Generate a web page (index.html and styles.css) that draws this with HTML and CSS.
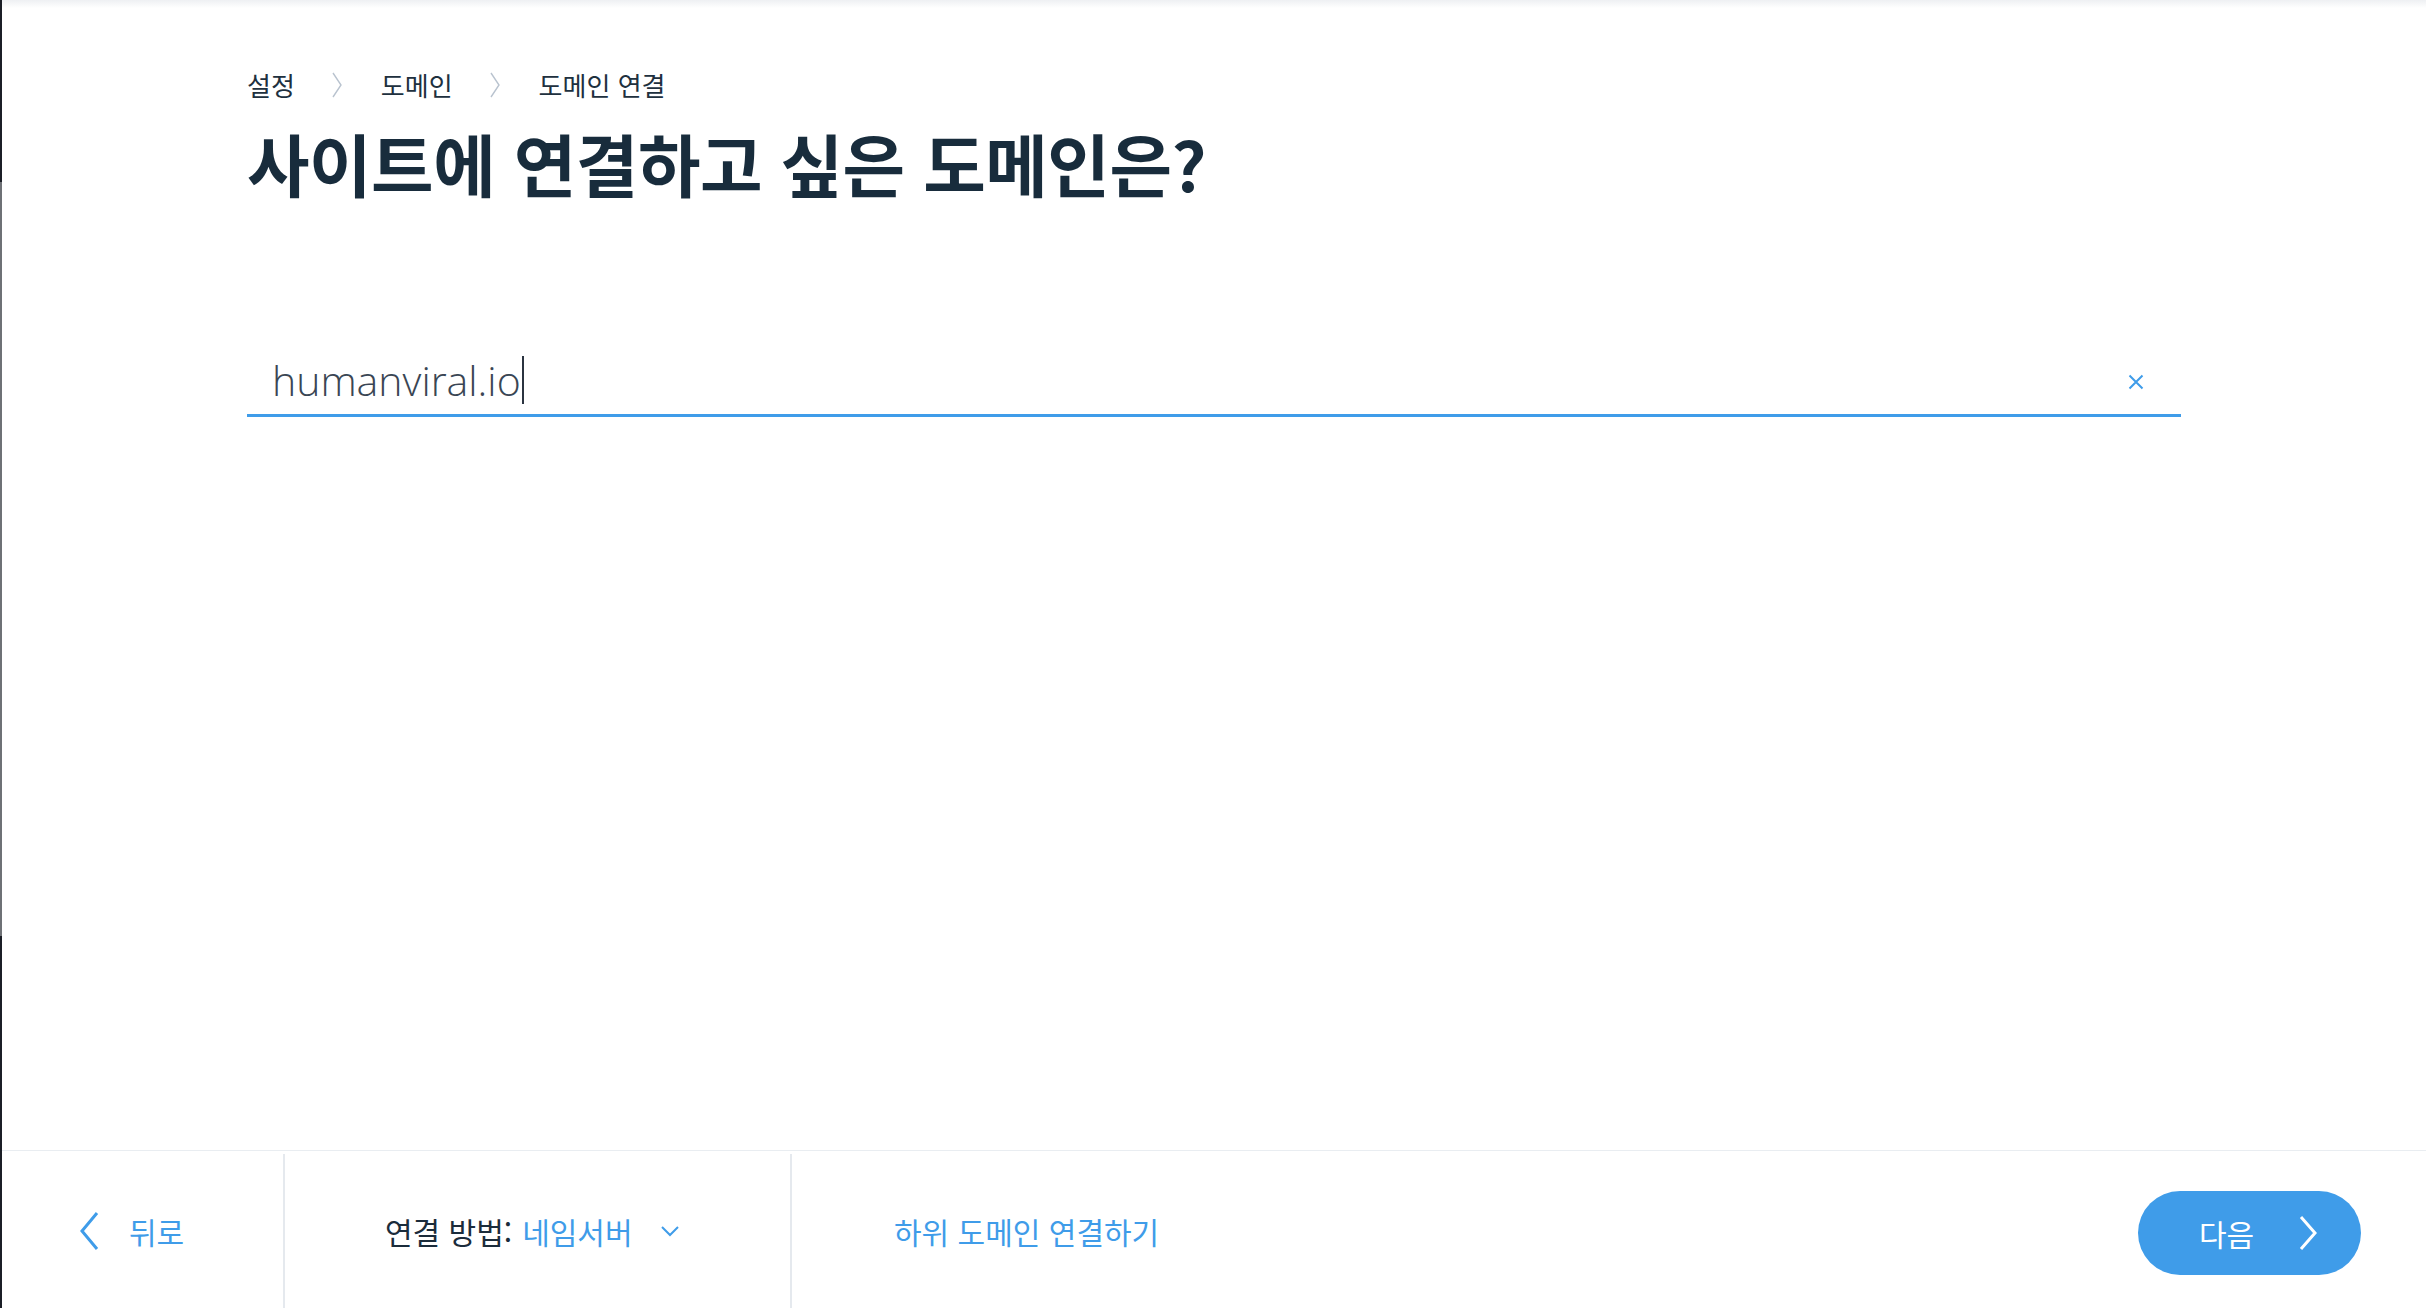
FILE: index.html
```html
<!DOCTYPE html>
<html lang="ko">
<head>
<meta charset="utf-8">
<title>도메인 연결</title>
<link rel="stylesheet" href="styles.css">
</head>
<body>
<div class="frame">
  <div class="edge"></div>
  <div class="page">
    <main class="content">
      <nav class="crumbs">
        <span class="crumb">설정</span>
        <svg class="sep" viewBox="0 0 12 26" width="12" height="26"><path d="M2 1 L10 13 L2 25" fill="none" stroke="#b9c3cf" stroke-width="1.4"/></svg>
        <span class="crumb">도메인</span>
        <svg class="sep" viewBox="0 0 12 26" width="12" height="26"><path d="M2 1 L10 13 L2 25" fill="none" stroke="#b9c3cf" stroke-width="1.4"/></svg>
        <span class="crumb">도메인 연결</span>
      </nav>
      <h1 class="title">사이트에 연결하고 싶은 도메인은?</h1>
      <div class="field">
        <span class="value">humanviral.io<span class="caret"></span></span>
        <svg class="clear" viewBox="0 0 16 16" width="16" height="16"><path d="M1.5 1.5 L14.5 14.5 M14.5 1.5 L1.5 14.5" stroke="#3f9ce9" stroke-width="2" fill="none"/></svg>
      </div>
    </main>
    <footer class="footer">
      <div class="back">
        <svg class="back-ico" viewBox="0 0 24 40" width="24" height="40"><path d="M20 2 L5 20 L20 38" fill="none" stroke="#3f9ce9" stroke-width="3"/></svg>
        <span class="link">뒤로</span>
      </div>
      <div class="method">
        <span class="label">연결 방법:</span>
        <span class="link">네임서버</span>
        <svg class="down" viewBox="0 0 20 12" width="20" height="12"><path d="M2 2 L10 10 L18 2" fill="none" stroke="#3f9ce9" stroke-width="2"/></svg>
      </div>
      <div class="sub">
        <span class="link">하위 도메인 연결하기</span>
      </div>
      <div class="spacer"></div>
      <button class="next">
        <span>다음</span>
        <svg viewBox="0 0 20 36" width="20" height="36"><path d="M3 2 L17 18 L3 34" fill="none" stroke="#ffffff" stroke-width="3"/></svg>
      </button>
    </footer>
  </div>
</div>
</body>
</html>
```
FILE: styles.css
```css
html, body {
  margin: 0;
  padding: 0;
  height: 100%;
  background: #ffffff;
}
body {
  font-family: "Noto Sans", "Noto Sans CJK KR", sans-serif;
  color: #162d3d;
}
.frame {
  display: flex;
  height: 1308px;
  width: 2426px;
  overflow: hidden;
}
.edge {
  width: 2px;
  flex: none;
  background: linear-gradient(to bottom, #1b1e26 0, #1b1e26 182px, #6e7176 182px, #6e7176 936px, #1b1e26 936px, #1b1e26 100%);
}
.page {
  flex: 1;
  display: flex;
  flex-direction: column;
  background: linear-gradient(to bottom, #eef0f3 0, #ffffff 8px);
}
.content {
  flex: 1;
  padding: 69px 245px 0 245px;
}
.crumbs {
  display: flex;
  align-items: center;
  height: 32px;
  font-family: "Noto Sans CJK KR", sans-serif;
  font-size: 26px;
  color: #20303e;
}
.crumb {
  line-height: 32px;
}
.sep {
  margin: 0 38px 0 36px;
}
.title {
  margin: 20px 0 0 0;
  font-family: "Noto Sans CJK KR", sans-serif;
  font-size: 68px;
  font-weight: 700;
  line-height: 84px;
  letter-spacing: -0.5px;
  color: #182c3c;
}
.field {
  margin-top: 137px;
  border-bottom: 3px solid #3f9ce9;
  display: flex;
  align-items: center;
  padding: 4px 37px 0 25px;
  box-sizing: border-box;
  height: 75px;
}
.value {
  flex: 1;
  font-family: "Open Sans", "Noto Sans", sans-serif;
  font-weight: 300;
  font-size: 41px;
  color: #3a4654;
  display: flex;
  align-items: center;
}
.caret {
  display: inline-block;
  width: 2px;
  height: 48px;
  background: #2b3440;
  margin-left: 1px;
}
.clear {
  flex: none;
  margin-top: 4px;
}
.footer {
  border-top: 1px solid #e9edf1;
  display: flex;
  align-items: stretch;
  font-family: "Noto Sans CJK KR", sans-serif;
  font-size: 30px;
  padding-top: 3px;
  box-sizing: border-box;
  height: 158px;
}
.link {
  color: #3f9ce9;
}
.back {
  width: 283px;
  border-right: 2px solid #e5e9ee;
  display: flex;
  align-items: center;
  padding-left: 75px;
  box-sizing: border-box;
}
.back-ico {
  margin-right: 28px;
}
.method {
  width: 507px;
  border-right: 2px solid #e5e9ee;
  display: flex;
  align-items: center;
  padding-left: 100px;
  box-sizing: border-box;
}
.label {
  color: #1b2c3b;
  margin-right: 10px;
}
.down {
  margin-left: 27px;
}
.sub {
  display: flex;
  align-items: center;
  padding-left: 102px;
}
.spacer {
  flex: 1;
}
.next {
  align-self: center;
  margin: 4px 65px 0 0;
  width: 223px;
  height: 84px;
  border: none;
  border-radius: 42px;
  background: #3f9ce9;
  color: #ffffff;
  font-family: "Noto Sans CJK KR", sans-serif;
  font-size: 30px;
  display: flex;
  align-items: center;
  justify-content: center;
  gap: 44px;
  padding: 0 0 0 18px;
}
```
